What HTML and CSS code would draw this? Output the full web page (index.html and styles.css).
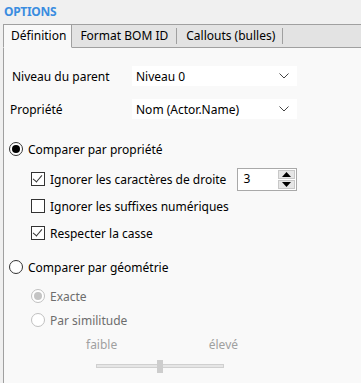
FILE: index.html
```html
<!DOCTYPE html>
<html lang="fr">
<head>
  <meta charset="UTF-8">
  <title>Options</title>
  <link rel="stylesheet" href="styles.css">
</head>
<body>

  <div class="title">OPTIONS</div>

  <div class="tabs">
    <div class="tab active">Définition</div>
    <div class="tab">Format BOM ID</div>
    <div class="tab">Callouts (bulles)</div>
    <div class="tab-rest"></div>
  </div>

  <div class="panel">
    <div class="field">
      <label class="field-label">Niveau du parent</label>
      <div class="combo">
        <span>Niveau 0</span>
        <svg width="10" height="6" viewBox="0 0 10 6"><path d="M0.5 0.5 L5 5 L9.5 0.5" fill="none" stroke="#444" stroke-width="1"/></svg>
      </div>
    </div>
    <div class="field field-2">
      <label class="field-label">Propriété</label>
      <div class="combo">
        <span>Nom (Actor.Name)</span>
        <svg width="10" height="6" viewBox="0 0 10 6"><path d="M0.5 0.5 L5 5 L9.5 0.5" fill="none" stroke="#444" stroke-width="1"/></svg>
      </div>
    </div>

    <div class="option radio-row first">
      <span class="radio checked"></span>
      <span>Comparer par propriété</span>
    </div>

    <div class="sub">
      <div class="option check-row">
        <span class="check checked"></span>
        <span>Ignorer les caractères de droite</span>
        <div class="spin">
          <span class="spin-value">3</span>
          <div class="spin-buttons">
            <span class="spin-btn"><svg width="9" height="5" viewBox="0 0 9 5"><path d="M0 5 L4.5 0 L9 5 Z" fill="#000"/></svg></span>
            <span class="spin-btn"><svg width="9" height="5" viewBox="0 0 9 5"><path d="M0 0 L4.5 5 L9 0 Z" fill="#000"/></svg></span>
          </div>
        </div>
      </div>
      <div class="option check-row">
        <span class="check"></span>
        <span>Ignorer les suffixes numériques</span>
      </div>
      <div class="option check-row">
        <span class="check checked"></span>
        <span>Respecter la casse</span>
      </div>
    </div>

    <div class="option radio-row second">
      <span class="radio"></span>
      <span>Comparer par géométrie</span>
    </div>

    <div class="sub disabled">
      <div class="option radio-row">
        <span class="radio checked"></span>
        <span>Exacte</span>
      </div>
      <div class="option radio-row">
        <span class="radio"></span>
        <span>Par similitude</span>
      </div>
    </div>

    <div class="scale">
      <div class="scale-labels">
        <span>faible</span>
        <span>élevé</span>
      </div>
      <div class="slider">
        <span class="thumb"></span>
      </div>
    </div>
  </div>

</body>
</html>
```

FILE: styles.css
```css
body {
  margin: 0;
  background-color: #f0f0f0;
  font-family: "Noto Sans", "Open Sans", sans-serif;
  font-size: 12px;
  color: #000;
  width: 361px;
  height: 383px;
  overflow: hidden;
  display: flex;
  flex-direction: column;
}

.title {
  height: 24px;
  padding: 3px 0 0 4px;
  box-sizing: border-box;
  font-weight: bold;
  color: #3a8de0;
  letter-spacing: -0.3px;
}

.tabs {
  display: flex;
  height: 24px;
  margin-left: 3px;
}

.tab {
  height: 22px;
  line-height: 21px;
  padding: 0 8px 0 9px;
  background-color: #e3e3e3;
  border-top: 1px solid #a0a0a0;
  border-bottom: 1px solid #a0a0a0;
  position: relative;
}

.tab::after {
  content: "";
  position: absolute;
  right: 0;
  top: 3px;
  bottom: 3px;
  border-right: 1px solid #a0a0a0;
}

.tab.active {
  background-color: #f9f9f9;
  border: 1px solid #a0a0a0;
  border-bottom: 1px solid #f9f9f9;
  padding: 0 5px 0 7px;
}

.tab.active::after {
  display: none;
}

.tab:nth-child(2) {
  padding: 0 9px 0 8px;
}

.tab-rest {
  flex: 1;
  height: 22px;
  background-color: #e3e3e3;
  border-top: 1px solid #a0a0a0;
  border-bottom: 1px solid #a0a0a0;
}

.panel {
  flex: 1;
  margin-left: 3px;
  border-left: 1px solid #a0a0a0;
  background-color: #f9f9f9;
  padding-left: 5px;
}

.field {
  display: flex;
  align-items: center;
  margin-top: 18px;
}

.field-2 {
  margin-top: 13px;
}

.field-label {
  width: 120px;
  padding-left: 3px;
}

.field-2 .field-label {
  padding-left: 1px;
  width: 122px;
}

.combo {
  width: 165px;
  height: 20px;
  background-color: #fff;
  display: flex;
  align-items: center;
  justify-content: space-between;
  padding: 0 8px 0 4px;
  box-sizing: border-box;
}

.combo svg {
  display: block;
}

.option {
  display: flex;
  align-items: center;
  gap: 5px;
  height: 20px;
}

.radio-row.first {
  margin-top: 20px;
}

.radio-row.second {
  margin-top: 14px;
}

.radio {
  width: 12px;
  height: 12px;
  border: 1px solid #333;
  border-radius: 50%;
  background-color: #fff;
  position: relative;
  flex-shrink: 0;
}

.radio.checked::after {
  content: "";
  position: absolute;
  left: 2px;
  top: 2px;
  width: 8px;
  height: 8px;
  border-radius: 50%;
  background-color: #000;
}

.sub {
  padding-left: 22px;
}

.check-row {
  margin-top: 7px;
}

.sub .check-row:first-child {
  margin-top: 10px;
}

.check {
  width: 12px;
  height: 12px;
  border: 1px solid #333;
  background-color: #fff;
  position: relative;
  flex-shrink: 0;
}

.check.checked::after {
  content: "";
  position: absolute;
  left: 3px;
  top: 0px;
  width: 4px;
  height: 8px;
  border-right: 1px solid #333;
  border-bottom: 1px solid #333;
  transform: rotate(40deg);
}

.spin {
  margin-left: 6px;
  width: 60px;
  height: 23px;
  border: 1px solid #a9a9a9;
  box-sizing: border-box;
  background-color: #fff;
  display: flex;
  justify-content: space-between;
}

.spin-value {
  padding: 1px 0 0 5px;
}

.spin-buttons {
  display: flex;
  flex-direction: column;
  gap: 1px;
  padding: 1px;
}

.spin-btn {
  width: 17px;
  flex: 1;
  background-color: #e6e6e6;
  border: 1px solid #c8c8c8;
  box-sizing: border-box;
  display: flex;
  align-items: center;
  justify-content: center;
}

.spin-btn svg {
  display: block;
}

.disabled {
  color: #6d6d6d;
}

.disabled .radio-row {
  margin-top: 4px;
}

.disabled .radio-row:first-child {
  margin-top: 9px;
}

.disabled .radio {
  border-color: #c0c0c0;
}

.disabled .radio.checked::after {
  background-color: #c4c4c4;
}

.scale {
  width: 152px;
  margin-left: 77px;
  margin-top: 6px;
  color: #a0a0a0;
}

.scale-labels {
  display: flex;
  justify-content: space-between;
}

.slider {
  margin: 11px 0 0 10px;
  width: 128px;
  height: 4px;
  background-color: #e6e6e6;
  border: 1px solid #d0d0d0;
  box-sizing: border-box;
  position: relative;
}

.thumb {
  position: absolute;
  left: 60px;
  top: -5px;
  width: 6px;
  height: 13px;
  background-color: #cdcdcd;
}
```
